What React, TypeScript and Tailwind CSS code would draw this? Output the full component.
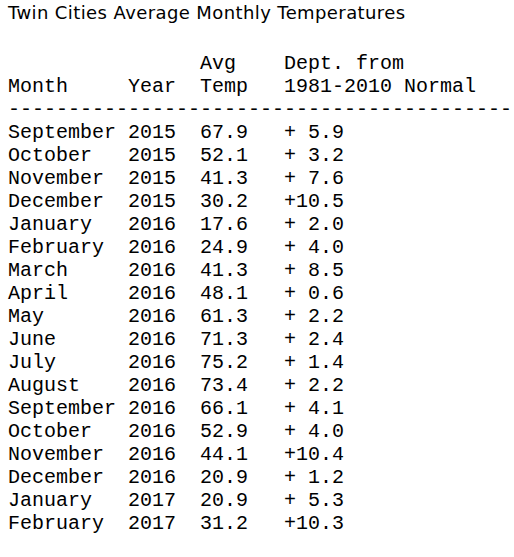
const rows: [string, string, string, string][] = [
  ["September", "2015", "67.9", "+ 5.9"],
  ["October", "2015", "52.1", "+ 3.2"],
  ["November", "2015", "41.3", "+ 7.6"],
  ["December", "2015", "30.2", "+10.5"],
  ["January", "2016", "17.6", "+ 2.0"],
  ["February", "2016", "24.9", "+ 4.0"],
  ["March", "2016", "41.3", "+ 8.5"],
  ["April", "2016", "48.1", "+ 0.6"],
  ["May", "2016", "61.3", "+ 2.2"],
  ["June", "2016", "71.3", "+ 2.4"],
  ["July", "2016", "75.2", "+ 1.4"],
  ["August", "2016", "73.4", "+ 2.2"],
  ["September", "2016", "66.1", "+ 4.1"],
  ["October", "2016", "52.9", "+ 4.0"],
  ["November", "2016", "44.1", "+10.4"],
  ["December", "2016", "20.9", "+ 1.2"],
  ["January", "2017", "20.9", "+ 5.3"],
  ["February", "2017", "31.2", "+10.3"],
];

export default function App() {
  const lines = [
    "                Avg    Dept. from",
    "Month     Year  Temp   1981-2010 Normal",
    "-".repeat(42),
    ...rows.map(
      ([m, y, t, d]) => `${m.padEnd(10)}${y}  ${t}   ${d}`
    ),
  ];

  return (
    <div className="w-[514px] h-[557px] overflow-hidden bg-white text-black pl-2">
      <h1 className="pt-[2px] text-[18px] leading-[22px] tracking-[0.4px] font-['DejaVu_Sans',sans-serif]">
        Twin Cities Average Monthly Temperatures
      </h1>
      <pre className="mt-[28px] font-['Liberation_Mono',monospace] text-[20px] leading-[23px] whitespace-pre">
        {lines.join("\n")}
      </pre>
    </div>
  );
}
